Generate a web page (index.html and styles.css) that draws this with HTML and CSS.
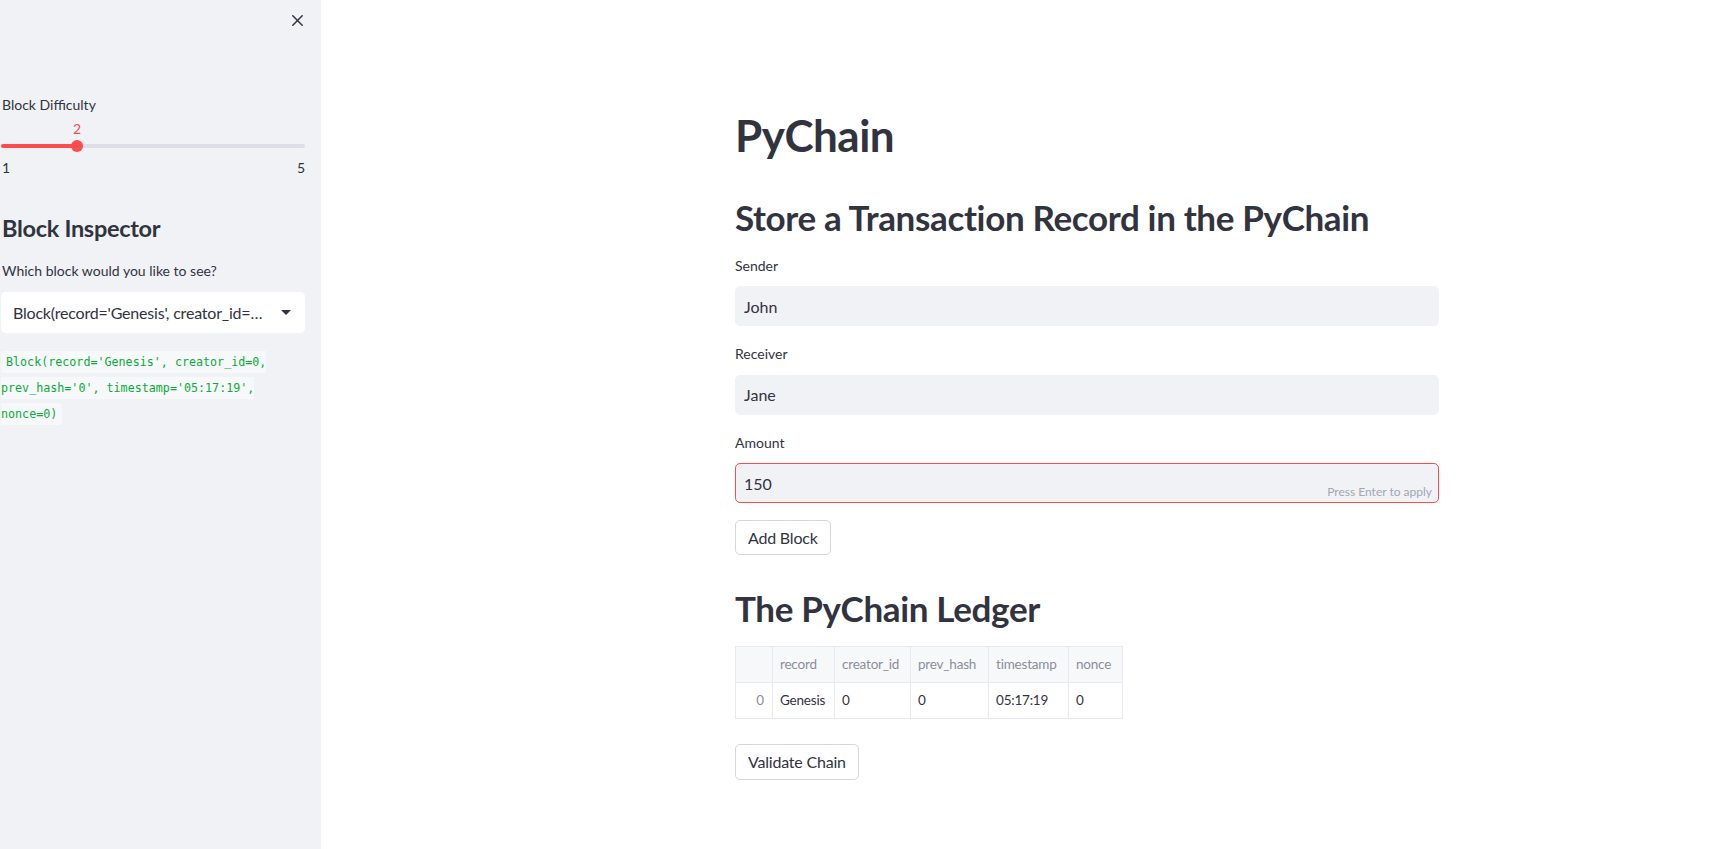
FILE: index.html
```html
<!DOCTYPE html>
<html lang="en">
<head>
<meta charset="utf-8">
<title>PyChain</title>
<link rel="stylesheet" href="styles.css">
</head>
<body>
<div class="app">
  <aside class="sidebar">
    <div class="sb-header">
      <button class="close-btn" aria-label="Close sidebar">
        <svg width="11" height="11" viewBox="0 0 11 11"><path d="M0.8 0.8 L10.2 10.2 M10.2 0.8 L0.8 10.2" stroke="#31333f" stroke-width="1.5" stroke-linecap="round" fill="none"/></svg>
      </button>
    </div>
    <div class="sb-content">
      <div class="widget-label slider-label">Block Difficulty</div>
      <div class="slider">
        <div class="slider-value-row">
          <span class="slider-value" style="left:25%">2</span>
        </div>
        <div class="slider-track">
          <div class="slider-fill" style="width:25%"></div>
          <div class="slider-thumb" style="left:25%"></div>
        </div>
        <div class="slider-minmax"><span>1</span><span>5</span></div>
      </div>
      <h3 class="sb-heading">Block Inspector</h3>
      <div class="widget-label select-label">Which block would you like to see?</div>
      <div class="select">
        <span class="select-text">Block(record='Genesis', creator_id=0, prev_hash='0', timestamp='05:17:19', nonce=0)</span>
        <svg class="select-caret" width="10" height="5" viewBox="0 0 10 5"><path d="M0 0 L10 0 L5 5 Z" fill="#31333f"/></svg>
      </div>
      <p class="code-para"><code>Block(record='Genesis', creator_id=0, prev_hash='0', timestamp='05:17:19', nonce=0)</code></p>
    </div>
  </aside>
  <main class="main">
    <div class="block-container">
      <h1 class="title">PyChain</h1>
      <h2 class="subtitle">Store a Transaction Record in the PyChain</h2>
      <div class="field first">
        <div class="widget-label">Sender</div>
        <div class="input"><span>John</span></div>
      </div>
      <div class="field">
        <div class="widget-label">Receiver</div>
        <div class="input"><span>Jane</span></div>
      </div>
      <div class="field">
        <div class="widget-label">Amount</div>
        <div class="input active"><span>150</span><span class="input-hint">Press Enter to apply</span></div>
      </div>
      <button class="btn add-btn">Add Block</button>
      <h2 class="subtitle ledger">The PyChain Ledger</h2>
      <table class="ledger-table">
        <colgroup>
          <col class="w0"><col class="w1"><col class="w2"><col class="w3"><col class="w4"><col class="w5">
        </colgroup>
        <thead>
          <tr><th class="idx"></th><th>record</th><th>creator_id</th><th>prev_hash</th><th>timestamp</th><th>nonce</th></tr>
        </thead>
        <tbody>
          <tr><td class="idx">0</td><td>Genesis</td><td>0</td><td>0</td><td>05:17:19</td><td>0</td></tr>
        </tbody>
      </table>
      <button class="btn validate-btn">Validate Chain</button>
    </div>
  </main>
</div>
</body>
</html>
```
FILE: styles.css
```css
* { box-sizing: border-box; }

html, body {
  margin: 0;
  padding: 0;
  background: #ffffff;
}

body {
  font-family: Lato, "Liberation Sans", sans-serif;
  color: #31333f;
  font-size: 16px;
}

.app {
  display: flex;
  min-height: 100vh;
}

/* ---------- Sidebar ---------- */
.sidebar {
  width: 321px;
  flex-shrink: 0;
  background: #f0f2f6;
  min-height: 849px;
  display: flex;
  flex-direction: column;
}

.sb-header {
  display: flex;
  justify-content: flex-end;
  padding: 15px 18px 0 0;
}

.close-btn {
  width: 11px;
  height: 11px;
  padding: 0;
  border: 0;
  background: none;
  display: block;
  line-height: 0;
}

.sb-content {
  padding: 0 16px 0 1px;
}

.widget-label {
  font-size: 14px;
  line-height: 20px;
  color: #31333f;
}

.slider-label {
  margin-top: 68.6px;
  padding-left: 1px;
}

.slider {
  width: 304px;
}

.slider-value-row {
  position: relative;
  height: 20px;
  margin-top: 4px;
}

.slider-value {
  position: absolute;
  top: 0;
  transform: translateX(-50%);
  font-size: 14px;
  line-height: 20px;
  color: #ff4b4b;
}

.slider-track {
  position: relative;
  height: 4px;
  margin-top: 5.4px;
  border-radius: 2px;
  background: #dcdfe7;
}

.slider-fill {
  height: 4px;
  border-radius: 2px;
  background: #ff4b4b;
}

.slider-thumb {
  position: absolute;
  top: -4px;
  width: 12px;
  height: 12px;
  margin-left: -6px;
  border-radius: 50%;
  background: #ff4b4b;
}

.slider-minmax {
  display: flex;
  justify-content: space-between;
  margin-top: 9.6px;
  padding-left: 1px;
  font-size: 14px;
  line-height: 20px;
}

.sb-heading {
  margin: 36.5px 0 0 0;
  padding-left: 1px;
  font-size: 23.5px;
  line-height: 1.2;
  font-weight: 700;
  letter-spacing: -0.3px;
}

.select-label {
  margin-top: 18.9px;
  padding-left: 1px;
}

.select {
  margin-top: 10.4px;
  height: 41px;
  background: #ffffff;
  border-radius: 5px;
  display: flex;
  align-items: center;
  padding: 0 14px 0 12px;
}

.select-text {
  flex: 1;
  min-width: 0;
  white-space: nowrap;
  overflow: hidden;
  text-overflow: ellipsis;
  font-size: 16px;
  letter-spacing: -0.2px;
  margin-right: 12px;
}

.select-caret {
  flex-shrink: 0;
}

.code-para {
  margin: 14.8px 0 0 0;
  font-size: 16px;
  line-height: 25.6px;
}

.code-para code {
  font-family: "DejaVu Sans Mono", "Liberation Mono", monospace;
  font-size: 11.7px;
  line-height: 1;
  color: #09ab3b;
  background: #f7f8fa;
  padding: 4px 5px;
  border-radius: 4px;
}

/* ---------- Main ---------- */
.main {
  flex: 1;
  min-width: 0;
}

.block-container {
  width: 704px;
  margin-left: 414px;
  padding-top: 108.6px;
  padding-bottom: 60px;
}

.title {
  margin: 0;
  font-size: 44px;
  line-height: 1.2;
  font-weight: 700;
  letter-spacing: -0.5px;
}

.subtitle {
  margin: 35px 0 0 0;
  font-size: 35px;
  line-height: 1.2;
  font-weight: 700;
  letter-spacing: -0.35px;
}

.field {
  margin-top: 18px;
}

.field.first {
  margin-top: 17.5px;
}

.input {
  position: relative;
  margin-top: 10.4px;
  height: 40px;
  background: #f0f2f6;
  border: 1px solid #f0f2f6;
  border-radius: 5px;
  display: flex;
  align-items: center;
  padding: 0 8px;
  font-size: 16px;
}

.input.active {
  border-color: #ff4b4b;
}

.input-hint {
  position: absolute;
  right: 6px;
  bottom: 2px;
  font-size: 12px;
  line-height: 16px;
  color: #a3a6b2;
}

.btn {
  display: block;
  font-family: inherit;
  font-size: 16px;
  line-height: 25.6px;
  color: #31333f;
  background: #ffffff;
  border: 1px solid #d5d6d9;
  border-radius: 5px;
  padding: 4px 12px;
  letter-spacing: -0.2px;
}

.add-btn {
  margin-top: 16.5px;
}

.subtitle.ledger {
  margin-top: 32px;
}

.ledger-table {
  margin-top: 16.4px;
  border-collapse: collapse;
  table-layout: fixed;
  width: 387px;
  font-size: 13.5px;
}

.ledger-table col.w0 { width: 37px; }
.ledger-table col.w1 { width: 62px; }
.ledger-table col.w2 { width: 76px; }
.ledger-table col.w3 { width: 78px; }
.ledger-table col.w4 { width: 80px; }
.ledger-table col.w5 { width: 54px; }

.ledger-table th,
.ledger-table td {
  border: 1px solid #e6e9ef;
  height: 36px;
  padding: 0 6px 0 7px;
  text-align: left;
  white-space: nowrap;
  overflow: hidden;
  letter-spacing: -0.2px;
}

.ledger-table th {
  background: #f7f8fa;
  color: #8b8e9a;
  font-weight: 400;
}

.ledger-table td {
  color: #31333f;
}

.ledger-table .idx {
  text-align: right;
  color: #8b8e9a;
  padding-right: 8px;
}

.validate-btn {
  margin-top: 25.5px;
}
```
